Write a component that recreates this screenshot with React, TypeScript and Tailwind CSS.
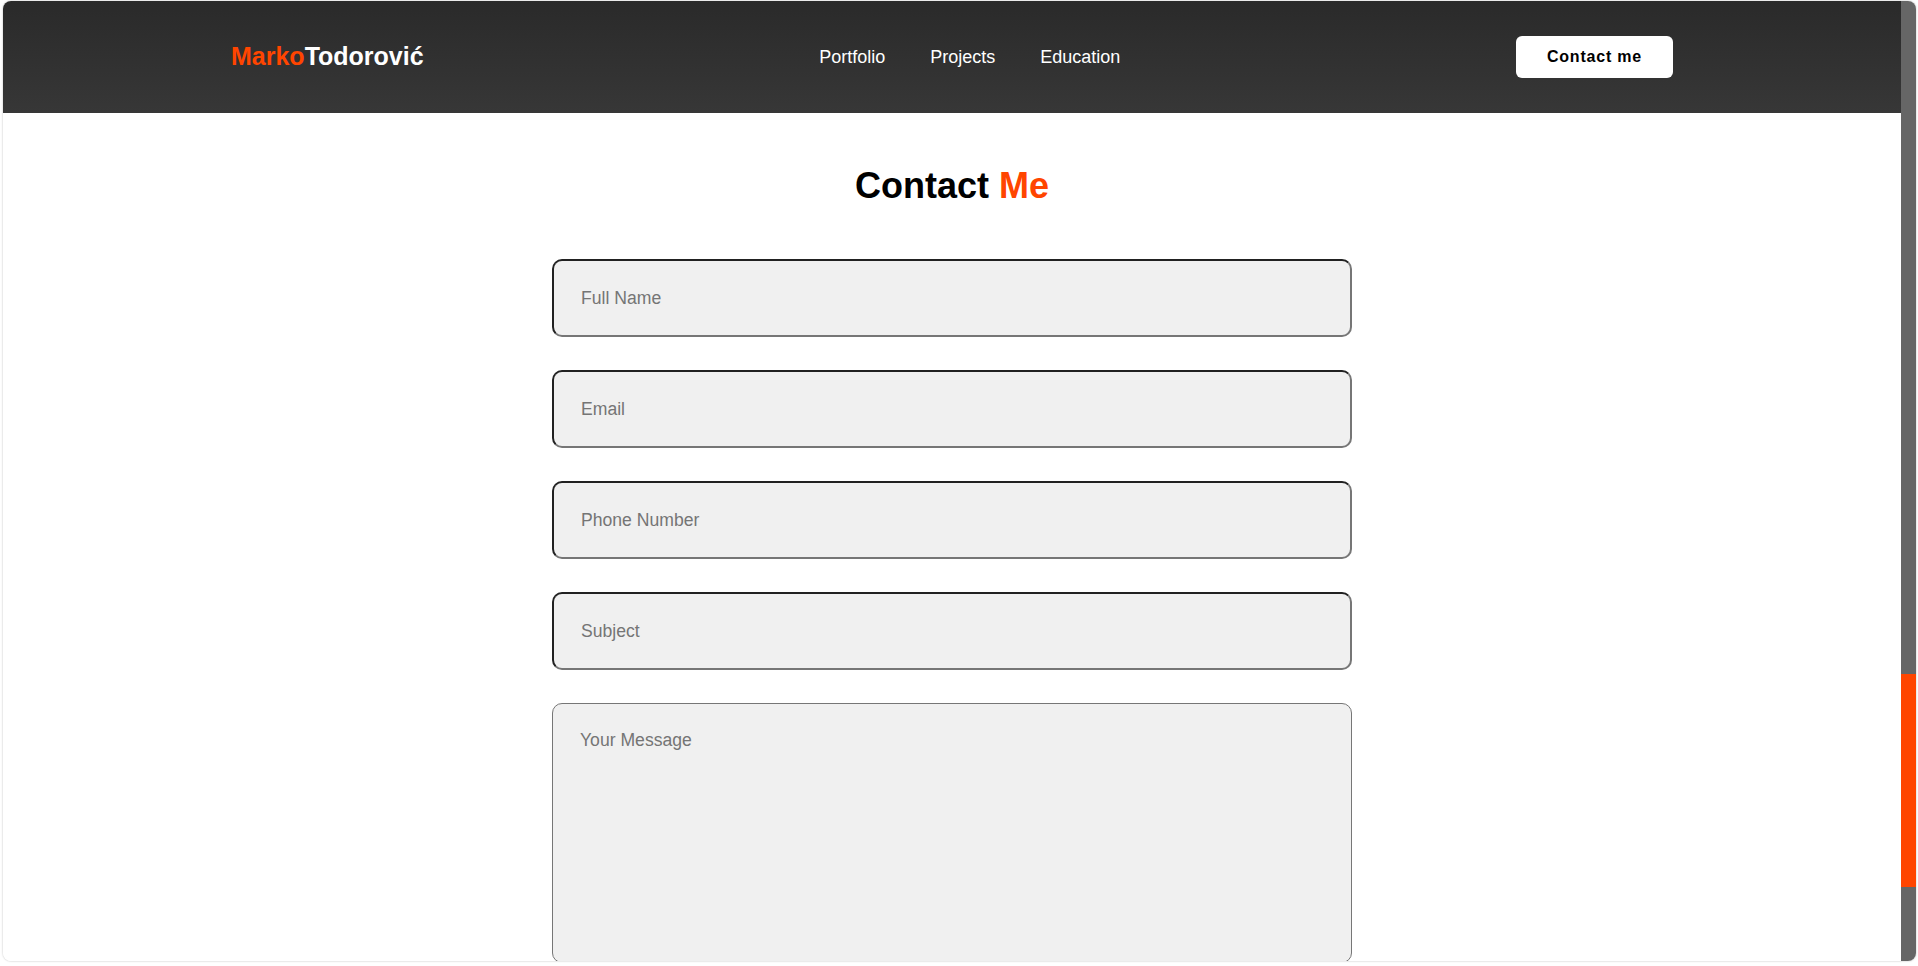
const navLinks = ["Portfolio", "Projects", "Education"];

const fields = ["Full Name", "Email", "Phone Number", "Subject"];

const App = () => {
  return (
    <div className="flex h-[966px] w-full overflow-hidden bg-white pb-[5px] pl-[3px] pr-[2px] pt-[1px] font-['Liberation_Sans',Arial,sans-serif]">
      <div className="flex flex-1 overflow-hidden rounded-[8px] shadow-[0_0_2px_rgba(0,0,0,0.3)]">
        <div className="flex flex-1 flex-col overflow-hidden bg-white">
          <header className="flex h-[112px] shrink-0 items-center justify-between bg-linear-to-b from-[#2a2a2a] to-[#373737] px-[228px]">
            <a href="#" className="text-[25px] font-bold text-white">
              <span className="text-[#ff4500]">Marko</span>Todorović
            </a>
            <nav className="flex items-center gap-[45px]">
              {navLinks.map((link) => (
                <a key={link} href="#" className="text-[18px] text-white">
                  {link}
                </a>
              ))}
            </nav>
            <button className="h-[42px] w-[157px] rounded-[6px] bg-white text-[16px] font-bold tracking-wider text-black">
              Contact me
            </button>
          </header>

          <section className="flex flex-col items-center">
            <h2 className="mb-[53px] mt-[53px] text-[36px] leading-10 font-bold text-black">
              Contact <span className="text-[#ff4500]">Me</span>
            </h2>
            <form className="flex w-[800px] flex-col gap-[33px]">
              {fields.map((field) => (
                <input
                  key={field}
                  type="text"
                  placeholder={field}
                  className="h-[78px] w-full rounded-[10px] border-2 border-[#767676] bg-[#f0f0f0] px-[27px] text-[17.6px] outline-none [border-style:inset] placeholder:text-[#757575]"
                />
              ))}
              <textarea
                placeholder="Your Message"
                className="h-[260px] w-full resize-none rounded-[10px] border border-[#767676] bg-[#f0f0f0] px-[27px] py-[23px] text-[17.6px] outline-none placeholder:text-[#757575]"
              />
            </form>
          </section>
        </div>

        <div className="flex w-[15px] shrink-0 flex-col bg-[#666666]">
          <div className="h-[673px]" />
          <div className="h-[213px] bg-[#ff4500]" />
        </div>
      </div>
    </div>
  );
};

export default App;
